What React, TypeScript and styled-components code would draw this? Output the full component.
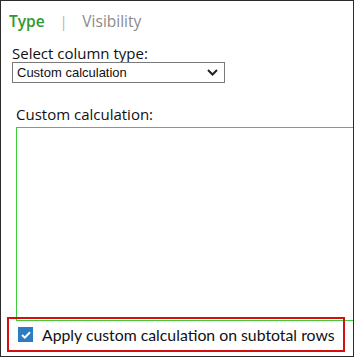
import { FC, useState } from "react";
import styled, { createGlobalStyle } from "styled-components";

const GlobalStyle = createGlobalStyle`
  html, body { margin: 0; padding: 0; background: #fff; }
  body { font-family: "Open Sans", "Noto Sans", sans-serif; }
`;

const Panel = styled.div`
  box-sizing: border-box;
  width: 354px;
  height: 357px;
  border: 1px solid #2b2b2b;
  overflow: hidden;
  background: #fff;
  display: flex;
  flex-direction: column;
`;

const Tabs = styled.div`
  display: flex;
  align-items: baseline;
  gap: 15px;
  padding: 9px 0 0 8px;
  font-size: 15.5px;
  line-height: 22px;
`;

const Tab = styled.span<{ $active?: boolean }>`
  color: ${(p) => (p.$active ? "#2f9a2f" : "#8a8a8a")};
  font-weight: ${(p) => (p.$active ? 600 : 400)};
`;

const Divider = styled.span`
  color: #b0b0b0;
  font-size: 14px;
`;

const Label = styled.div<{ $indent: number; $top: number }>`
  padding-left: ${(p) => p.$indent}px;
  margin-top: ${(p) => p.$top}px;
  font-size: 15px;
  line-height: 18px;
  color: #111;
`;

const SelectBox = styled.div`
  box-sizing: border-box;
  display: flex;
  align-items: center;
  width: 213px;
  height: 21px;
  margin-left: 11px;
  border: 1px solid #7a7a7a;
  padding-right: 6px;
`;

const Select = styled.select`
  flex: 1;
  appearance: none;
  border: none;
  outline: none;
  background: transparent;
  font-family: "Liberation Sans", Arial, sans-serif;
  font-size: 13px;
  color: #111;
  padding: 0 0 0 4px;
  height: 19px;
`;

const Formula = styled.textarea`
  box-sizing: border-box;
  display: block;
  width: 360px;
  height: 194px;
  margin: 4px 0 0 15px;
  border: 1px solid #3ccf3c;
  outline: none;
  resize: none;
  background: transparent;
`;

const Highlight = styled.label`
  box-sizing: border-box;
  display: flex;
  align-items: center;
  gap: 9px;
  width: 338px;
  height: 35px;
  margin: -4px 0 0 6px;
  padding-left: 9px;
  border: 2px solid #d40f0f;
  font-family: Lato, "Open Sans", sans-serif;
  font-size: 15.8px;
  white-space: nowrap;
  color: #111;
  cursor: pointer;
`;

const Check = styled.span<{ $on: boolean }>`
  width: 15px;
  height: 15px;
  flex: none;
  display: flex;
  align-items: center;
  justify-content: center;
  background: ${(p) => (p.$on ? "#2b7cc1" : "#fff")};
  border: ${(p) => (p.$on ? "none" : "1px solid #555")};
  box-sizing: border-box;
`;

const Chevron: FC = () => (
  <svg width="11" height="7" viewBox="0 0 11 7">
    <path d="M1 1l4.5 4.5L10 1" fill="none" stroke="#222" strokeWidth="2" />
  </svg>
);

const App: FC = () => {
  const [applySubtotal, setApplySubtotal] = useState(true);
  return (
    <>
      <GlobalStyle />
      <Panel>
        <Tabs>
          <Tab $active>Type</Tab>
          <Divider>|</Divider>
          <Tab>Visibility</Tab>
        </Tabs>
        <Label $indent={11} $top={11}>
          Select column type:
        </Label>
        <SelectBox>
          <Select defaultValue="custom">
            <option value="custom">Custom calculation</option>
            <option value="sum">Sum</option>
          </Select>
          <Chevron />
        </SelectBox>
        <Label $indent={15} $top={22}>
          Custom calculation:
        </Label>
        <Formula />
        <Highlight onClick={() => setApplySubtotal((v) => !v)}>
          <Check $on={applySubtotal}>
            {applySubtotal && (
              <svg width="10" height="8" viewBox="0 0 10 8">
                <path d="M1 4l2.8 2.6L9 1.2" fill="none" stroke="#fff" strokeWidth="2" />
              </svg>
            )}
          </Check>
          Apply custom calculation on subtotal rows
        </Highlight>
      </Panel>
    </>
  );
};

export default App;
